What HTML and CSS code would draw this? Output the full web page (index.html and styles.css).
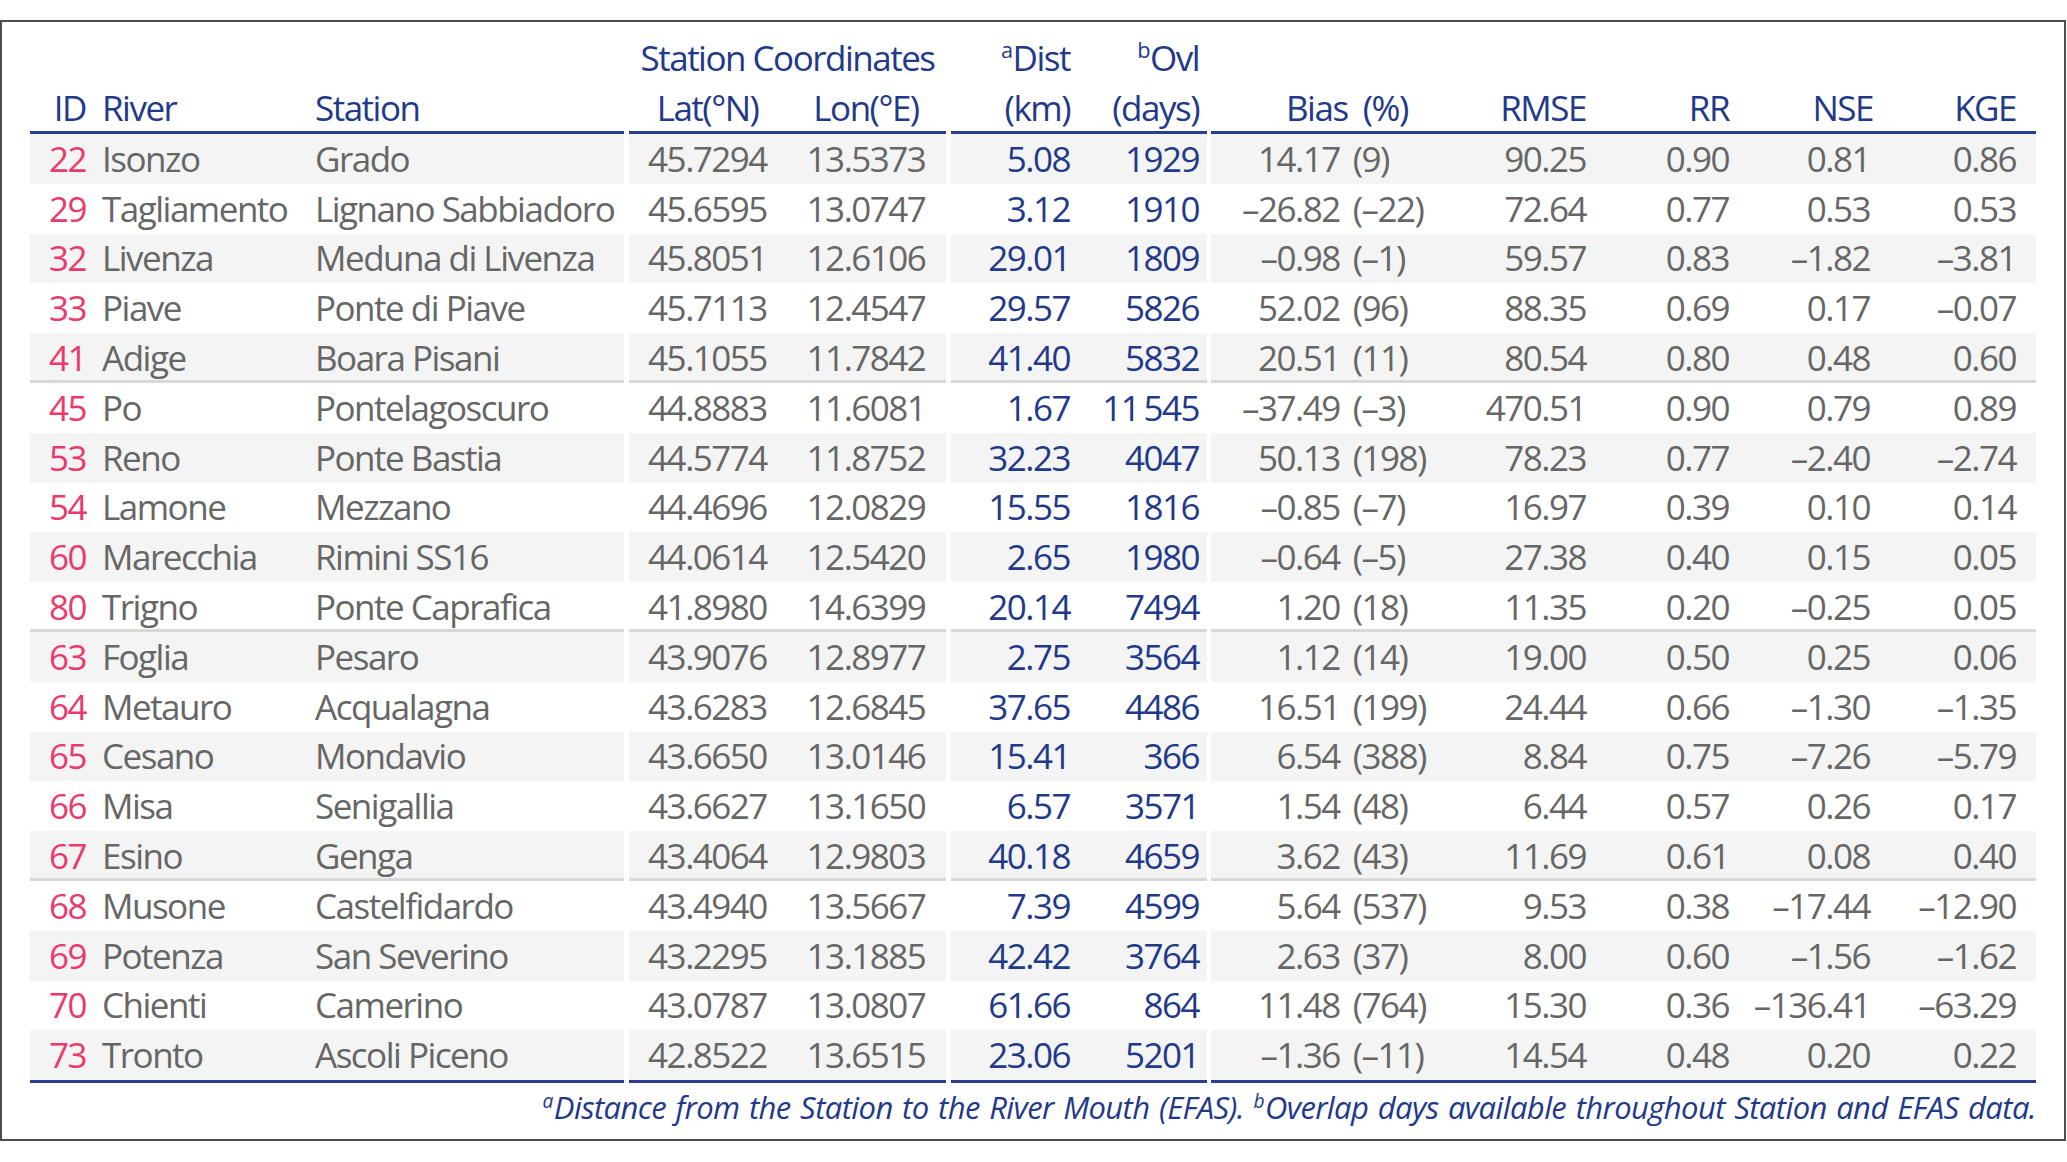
FILE: index.html
```html
<!DOCTYPE html>
<html lang="en">
<head>
    <meta charset="UTF-8">
    <title>Station statistics</title>
    <link rel="stylesheet" href="styles.css">
</head>
<body>
    <div class="frame">
        <table class="stats">
            <colgroup>
                <col class="w-id"><col class="w-river"><col class="w-station"><col class="w-gap">
                <col class="w-lat"><col class="w-lon"><col class="w-gap">
                <col class="w-dist"><col class="w-ovl"><col class="w-gap4">
                <col class="w-bias"><col class="w-rmse"><col class="w-rr"><col class="w-nse"><col class="w-kge">
            </colgroup>
            <thead>
                <tr class="head-top">
                    <th></th><th></th><th></th><td class="gap"></td>
                    <th colspan="2" class="c-center">Station Coordinates</th><td class="gap"></td>
                    <th class="c-dist"><sup>a</sup>Dist</th><th class="c-ovl"><sup>b</sup>Ovl</th><td class="gap"></td>
                    <th></th><th></th><th></th><th></th><th></th>
                </tr>
                <tr class="head-main">
                    <th class="c-id">ID</th><th class="c-river">River</th><th class="c-station">Station</th><td class="gap"></td>
                    <th class="c-center">Lat(°N)</th><th class="c-center">Lon(°E)</th><td class="gap"></td>
                    <th class="c-dist">(km)</th><th class="c-ovl">(days)</th><td class="gap"></td>
                    <th class="c-bias-head">Bias&nbsp; (%)</th><th class="c-rmse">RMSE</th><th class="c-rr">RR</th><th class="c-nse nse-head">NSE</th><th class="c-kge">KGE</th>
                </tr>
            </thead>
            <tbody id="statsBody">
                <!-- rows are filled in below -->
            </tbody>
        </table>
        <p class="note"><sup>a</sup>Distance from the Station to the River Mouth (EFAS). <sup>b</sup>Overlap days available throughout Station and EFAS data.</p>
    </div>

    <script>
        // id, river, station, lat, lon, dist, ovl, bias, bias %, rmse, rr, nse, kge
        const rows = [
            ['22', 'Isonzo', 'Grado', '45.7294', '13.5373', '5.08', '1929', '14.17', '(9)', '90.25', '0.90', '0.81', '0.86'],
            ['29', 'Tagliamento', 'Lignano Sabbiadoro', '45.6595', '13.0747', '3.12', '1910', '–26.82', '(–22)', '72.64', '0.77', '0.53', '0.53'],
            ['32', 'Livenza', 'Meduna di Livenza', '45.8051', '12.6106', '29.01', '1809', '–0.98', '(–1)', '59.57', '0.83', '–1.82', '–3.81'],
            ['33', 'Piave', 'Ponte di Piave', '45.7113', '12.4547', '29.57', '5826', '52.02', '(96)', '88.35', '0.69', '0.17', '–0.07'],
            ['41', 'Adige', 'Boara Pisani', '45.1055', '11.7842', '41.40', '5832', '20.51', '(11)', '80.54', '0.80', '0.48', '0.60'],
            ['45', 'Po', 'Pontelagoscuro', '44.8883', '11.6081', '1.67', '11\u2009545', '–37.49', '(–3)', '470.51', '0.90', '0.79', '0.89'],
            ['53', 'Reno', 'Ponte Bastia', '44.5774', '11.8752', '32.23', '4047', '50.13', '(198)', '78.23', '0.77', '–2.40', '–2.74'],
            ['54', 'Lamone', 'Mezzano', '44.4696', '12.0829', '15.55', '1816', '–0.85', '(–7)', '16.97', '0.39', '0.10', '0.14'],
            ['60', 'Marecchia', 'Rimini SS16', '44.0614', '12.5420', '2.65', '1980', '–0.64', '(–5)', '27.38', '0.40', '0.15', '0.05'],
            ['80', 'Trigno', 'Ponte Caprafica', '41.8980', '14.6399', '20.14', '7494', '1.20', '(18)', '11.35', '0.20', '–0.25', '0.05'],
            ['63', 'Foglia', 'Pesaro', '43.9076', '12.8977', '2.75', '3564', '1.12', '(14)', '19.00', '0.50', '0.25', '0.06'],
            ['64', 'Metauro', 'Acqualagna', '43.6283', '12.6845', '37.65', '4486', '16.51', '(199)', '24.44', '0.66', '–1.30', '–1.35'],
            ['65', 'Cesano', 'Mondavio', '43.6650', '13.0146', '15.41', '366', '6.54', '(388)', '8.84', '0.75', '–7.26', '–5.79'],
            ['66', 'Misa', 'Senigallia', '43.6627', '13.1650', '6.57', '3571', '1.54', '(48)', '6.44', '0.57', '0.26', '0.17'],
            ['67', 'Esino', 'Genga', '43.4064', '12.9803', '40.18', '4659', '3.62', '(43)', '11.69', '0.61', '0.08', '0.40'],
            ['68', 'Musone', 'Castelfidardo', '43.4940', '13.5667', '7.39', '4599', '5.64', '(537)', '9.53', '0.38', '–17.44', '–12.90'],
            ['69', 'Potenza', 'San Severino', '43.2295', '13.1885', '42.42', '3764', '2.63', '(37)', '8.00', '0.60', '–1.56', '–1.62'],
            ['70', 'Chienti', 'Camerino', '43.0787', '13.0807', '61.66', '864', '11.48', '(764)', '15.30', '0.36', '–136.41', '–63.29'],
            ['73', 'Tronto', 'Ascoli Piceno', '42.8522', '13.6515', '23.06', '5201', '–1.36', '(–11)', '14.54', '0.48', '0.20', '0.22']
        ];

        // a light rule closes each block of five stations
        const blockEnds = [4, 9, 14];

        let html = '';
        rows.forEach((r, i) => {
            const [whole, frac] = r[7].split('.');
            const cls = blockEnds.includes(i) ? ' class="block-end"' : '';
            html += `<tr${cls}>
                <td class="c-id">${r[0]}</td>
                <td class="c-river">${r[1]}</td>
                <td class="c-station">${r[2]}</td>
                <td class="gap"></td>
                <td class="c-center">${r[3]}</td>
                <td class="c-center">${r[4]}</td>
                <td class="gap"></td>
                <td class="c-dist">${r[5]}</td>
                <td class="c-ovl">${r[6]}</td>
                <td class="gap"></td>
                <td class="c-bias"><span class="bias-int">${whole}</span>.${frac}<span class="bias-pct">${r[8]}</span></td>
                <td class="c-rmse">${r[9]}</td>
                <td class="c-rr">${r[10]}</td>
                <td class="c-nse">${r[11]}</td>
                <td class="c-kge">${r[12]}</td>
            </tr>`;
        });
        document.getElementById('statsBody').innerHTML = html;
    </script>
</body>
</html>
```

FILE: styles.css
```css
body {
    margin: 0;
    background-color: #ffffff;
    font-family: "Open Sans", "Noto Sans", sans-serif;
}
.frame {
    margin-top: 20px;
    width: 2066px;
    height: 1121px;
    border: 2px solid #4d4d4d;
    box-sizing: border-box;
    padding: 12px 0 0 28px;
}
.stats {
    table-layout: fixed;
    width: 2006px;
    border-collapse: separate;
    border-spacing: 0;
    font-size: 35px;
    letter-spacing: -1.5px;
    color: #666666;
    white-space: nowrap;
}
.w-id { width: 56px; }
.w-river { width: 219px; }
.w-station { width: 319px; }
.w-gap { width: 5px; }
.w-gap4 { width: 4px; }
.w-lat { width: 157px; }
.w-lon { width: 160px; }
.w-dist { width: 127px; }
.w-ovl { width: 129px; }
.w-bias { width: 239px; }
.w-rmse { width: 150px; }
.w-rr { width: 140px; }
.w-nse { width: 140px; }
.w-kge { width: 156px; }

th, td {
    padding: 0;
    line-height: 40px;
    vertical-align: middle;
    text-align: left;
    overflow: visible;
}
th {
    font-weight: normal;
    color: #22398a;
}
.head-top th {
    height: 48px;
}
.head-main th {
    height: 47px;
    padding-top: 2px;
    border-bottom: 3px solid #26408f;
}
tbody td {
    height: 49.8px;
}
tbody tr:nth-child(odd) td:not(.gap) {
    background-color: #f3f4f3;
}
tbody tr.block-end td:not(.gap) {
    box-shadow: inset 0 -3px 0 #d8d8d8;
}
tbody tr:last-child td:not(.gap) {
    border-bottom: 3px solid #26408f;
}

.c-id { text-align: right; padding-right: 0; color: #ea3a6c; }
th.c-id { color: #22398a; }
.c-river { padding-left: 16px; }
.c-station { padding-left: 10px; }
.c-center { text-align: center; }
.c-dist { text-align: right; padding-right: 8px; color: #22398a; }
.c-ovl { text-align: right; padding-right: 8px; color: #22398a; }
.c-bias-head { padding-left: 75px; }
.bias-int {
    display: inline-block;
    width: 84px;
    text-align: right;
}
.bias-pct { margin-left: 13px; }
.c-rmse { text-align: right; padding-right: 14px; }
.c-rr { text-align: right; padding-right: 11px; }
.c-nse { text-align: right; padding-right: 10px; }
th.nse-head { padding-right: 7px; }
.c-kge { text-align: right; padding-right: 20px; }

sup {
    font-size: 0.62em;
    line-height: 0;
    vertical-align: 0.6em;
    margin-right: 1px;
}
.note {
    width: 2006px;
    margin: 3px 0 0 0;
    text-align: right;
    font-style: italic;
    font-size: 31px;
    letter-spacing: -0.6px;
    word-spacing: 2px;
    color: #22398a;
}
```
